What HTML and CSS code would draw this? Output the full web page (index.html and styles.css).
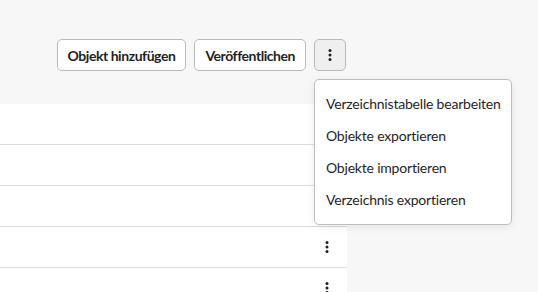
FILE: index.html
```html
<!DOCTYPE html>
<html lang="de">
<head>
<meta charset="utf-8">
<link rel="stylesheet" href="styles.css">
</head>
<body>
<div class="main">
  <div class="toolbar">
    <button class="btn">Objekt hinzufügen</button>
    <button class="btn">Veröffentlichen</button>
    <div class="menu-wrap">
      <button class="btn btn-icon active" aria-label="Mehr">
        <svg width="4" height="12" viewBox="0 0 4 12"><circle cx="2" cy="1.6" r="1.5"/><circle cx="2" cy="6" r="1.5"/><circle cx="2" cy="10.4" r="1.5"/></svg>
      </button>
      <div class="menu">
        <div class="menu-item">Verzeichnistabelle bearbeiten</div>
        <div class="menu-item">Objekte exportieren</div>
        <div class="menu-item">Objekte importieren</div>
        <div class="menu-item">Verzeichnis exportieren</div>
      </div>
    </div>
  </div>
  <div class="table">
    <div class="row"></div>
    <div class="row"></div>
    <div class="row"></div>
    <div class="row"><span class="row-action"><svg width="4" height="12" viewBox="0 0 4 12"><circle cx="2" cy="1.6" r="1.5"/><circle cx="2" cy="6" r="1.5"/><circle cx="2" cy="10.4" r="1.5"/></svg></span></div>
    <div class="row row-last"><span class="row-action"><svg width="4" height="12" viewBox="0 0 4 12"><circle cx="2" cy="1.6" r="1.5"/><circle cx="2" cy="6" r="1.5"/><circle cx="2" cy="10.4" r="1.5"/></svg></span></div>
  </div>
</div>
</body>
</html>
```

FILE: styles.css
```css
html, body {
  margin: 0;
  padding: 0;
}
body {
  background: #f7f7f7;
  font-family: Lato, "Open Sans", sans-serif;
  color: #1f1f1f;
  height: 292px;
  overflow: hidden;
}
.main {
  width: 347px;
  height: 292px;
  display: flex;
  flex-direction: column;
}
.toolbar {
  display: flex;
  justify-content: flex-end;
  gap: 8px;
  padding: 39px 1px 0 0;
}
.btn {
  height: 32px;
  padding: 0 10px;
  border: 1px solid #b9b9b9;
  border-radius: 5px;
  background: #fff;
  font-family: inherit;
  font-weight: 700;
  font-size: 14px;
  letter-spacing: -0.45px;
  color: #1f1f1f;
  display: flex;
  align-items: center;
  justify-content: center;
}
.btn-icon {
  width: 32px;
  padding: 0;
}
.btn-icon.active {
  background: #efefef;
}
.btn svg, .row-action svg {
  fill: #1f1f1f;
}
.menu-wrap {
  position: relative;
}
.menu {
  position: absolute;
  left: 0;
  top: 40px;
  width: 196px;
  padding: 7px 0 9px;
  background: #fff;
  border: 1px solid #bdbdbd;
  border-radius: 5px;
  box-shadow: 0 2px 8px rgba(0,0,0,0.08);
  z-index: 2;
}
.menu-item {
  height: 32px;
  display: flex;
  align-items: center;
  padding: 0 11px;
  font-size: 14px;
  letter-spacing: -0.2px;
  white-space: nowrap;
}
.table {
  margin-top: 33px;
  background: #fff;
  flex: 1;
  min-height: 0;
  overflow: hidden;
}
.row {
  height: 40px;
  border-bottom: 1px solid #dcdcdc;
  display: flex;
  align-items: center;
  justify-content: flex-end;
  padding-right: 18px;
}
.row-action {
  display: flex;
}
```
